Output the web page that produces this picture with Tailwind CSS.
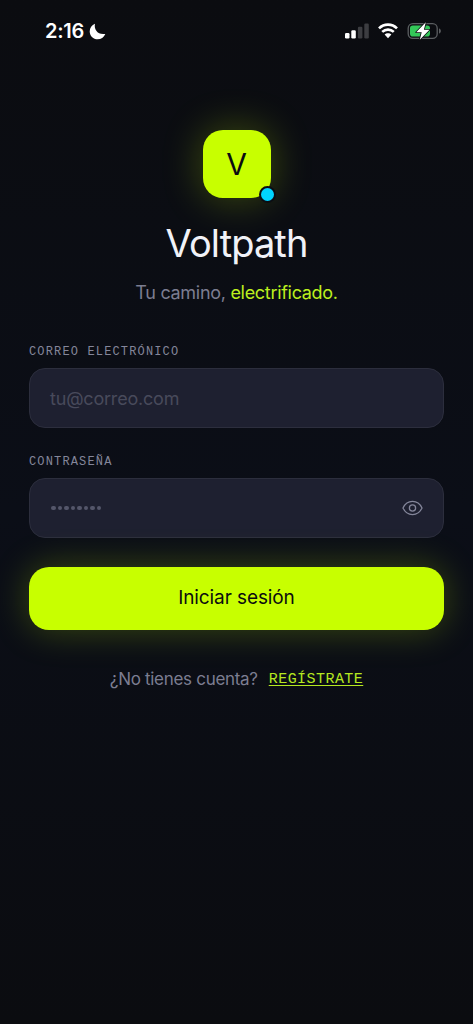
<!DOCTYPE html>
<html lang="es">
<head>
<meta charset="utf-8">
<meta name="viewport" content="width=device-width, initial-scale=1">
<title>Voltpath</title>
<script src="https://cdn.jsdelivr.net/npm/@tailwindcss/browser@4"></script>
</head>
<body class="h-[1024px] overflow-hidden bg-[#0b0c10] bg-linear-to-b from-[#0b0c10] via-[#0b0e17] to-[#0b0c10] font-['Inter',sans-serif] text-white">
<header class="flex h-[62px] items-center justify-between pr-[31px] pl-[45px]">
  <div class="flex items-center gap-[5px]">
    <span class="text-[20px] leading-6 font-semibold tracking-[-0.3px]">2:16</span>
    <svg class="size-[17px]" viewBox="0 0 17 17" fill="#fff"><path d="M6 .8C4.600 6.500 9 12.300 16.300 10.900C14.900 14.300 12 16.300 8.700 16.300C4.200 16.300.7 12.900.7 8.500C.7 5.100 2.800 2.100 6 .8Z"/></svg>
  </div>
  <div class="flex items-center">
    <svg class="mr-[9px] h-[16px] w-[24px]" viewBox="0 0 24 16"><g fill="#fff"><rect x="0" y="10" width="4.500" height="5.500" rx="1.200"/><rect x="6.300" y="7.300" width="4.500" height="8.200" rx="1.200"/></g><g fill="#3c3d41"><rect x="12.900" y="3.800" width="4.500" height="11.700" rx="1.200"/><rect x="19.300" y="0.500" width="4.500" height="15" rx="1.200"/></g></svg>
    <svg class="mr-[9px] h-[16px] w-[20px]" viewBox="0 0 20 16" fill="none" stroke="#fff" stroke-width="2.600"><path d="M1 5.400C6 .4 14 .4 19 5.400"/><path d="M4.200 8.900C7.500 5.800 12.500 5.800 15.800 8.900"/><path d="M10 10.300C8.700 10.300 7.500 10.800 6.600 11.600L10 15.200L13.400 11.600C12.500 10.800 11.300 10.300 10 10.300Z" fill="#fff" stroke="none"/></svg>
    <svg class="h-[20px] w-[35px]" viewBox="0 0 35 20"><rect x="1.200" y="2.700" width="29" height="14.600" rx="4.600" fill="none" stroke="#5b5e61" stroke-width="1.300"/><path d="M32 7.500C34.500 8 34.500 12 32 12.500Z" fill="#5b5e61"/><rect x="3" y="4.500" width="20" height="11" rx="2.800" fill="#34c759"/><path d="M18.800 1.300L9.200 11.300H14.700L12.800 18.700L22.500 8.700H16.900Z" fill="#fff" stroke="#0b0c10" stroke-width="1.600" paint-order="stroke" stroke-linejoin="round"/></svg>
  </div>
</header>
<main class="flex flex-col px-[29px] pt-[68px]">
  <div class="relative flex size-[68px] items-center justify-center self-center rounded-[20px] bg-[#c8ff00] shadow-[0_0_40px_rgba(200,255,0,0.28)]">
    <span class="font-['Inter',sans-serif] text-[30px] leading-none text-[#0b0c10]">V</span>
    <span class="absolute -right-[5px] -bottom-[5px] size-[17px] rounded-full border-2 border-[#0b0d13] bg-[#00d4ff]"></span>
  </div>
  <h1 class="mt-[22px] h-[46px] self-center text-[38px] leading-[46px] tracking-[-0.9px] whitespace-nowrap text-[#f1f2f8]">Voltpath</h1>
  <p class="mt-[14px] h-[26px] self-center text-[18px] leading-[26px] tracking-[-0.3px] whitespace-nowrap text-[#7c7d91]">Tu camino, <span class="text-[#bdf01e]">electrificado.</span></p>
  <label class="mt-[38px] h-[16px] font-['Liberation_Mono',monospace] text-[12px] leading-4 tracking-[1.15px] text-[#84869a]">CORREO ELECTRÓNICO</label>
  <div class="mt-[8px] flex h-[60px] items-center rounded-[16px] border border-[#2c2e3d] bg-[#1e2030] pl-[20px] text-[18px] tracking-[-0.2px] text-[#484a5b]">tu@correo.com</div>
  <label class="mt-[26px] h-[16px] font-['Liberation_Mono',monospace] text-[12px] leading-4 tracking-[1.15px] text-[#84869a]">CONTRASEÑA</label>
  <div class="mt-[8px] flex h-[60px] items-center justify-between rounded-[16px] border border-[#2c2e3d] bg-[#1e2030] pr-[20px] pl-[21px]">
    <div class="flex gap-[2px]"><i class="size-[4.500px] rounded-full bg-[#54566a]"></i><i class="size-[4.500px] rounded-full bg-[#54566a]"></i><i class="size-[4.500px] rounded-full bg-[#54566a]"></i><i class="size-[4.500px] rounded-full bg-[#54566a]"></i><i class="size-[4.500px] rounded-full bg-[#54566a]"></i><i class="size-[4.500px] rounded-full bg-[#54566a]"></i><i class="size-[4.500px] rounded-full bg-[#54566a]"></i><i class="size-[4.500px] rounded-full bg-[#54566a]"></i></div>
    <svg class="h-[16px] w-[21px]" viewBox="0 0 21 16" fill="none" stroke="#84869a" stroke-width="1.300"><path d="M1 8C3 3.700 6.300 1.400 10.500 1.400S18 3.700 20 8C18 12.300 14.700 14.600 10.500 14.600S3 12.300 1 8Z" stroke-linejoin="round"/><circle cx="10.500" cy="8" r="3.100"/></svg>
  </div>
  <button class="mt-[29px] h-[63px] rounded-[20px] bg-[#c8ff00] text-[19px] tracking-[-0.1px] text-[#0b0c10] shadow-[0_0_36px_rgba(200,255,0,0.25)]">Iniciar sesión</button>
  <div class="mt-[37px] flex h-[26px] items-center self-center whitespace-nowrap">
    <span class="text-[17px] tracking-[-0.3px] text-[#7c7d91]">¿No tienes cuenta?</span>
    <a class="ml-[11px] font-['Liberation_Mono',monospace] text-[15px] tracking-[0.45px] text-[#b5e820] underline decoration-1 underline-offset-2">REGÍSTRATE</a>
  </div>
</main>
</body>
</html>
